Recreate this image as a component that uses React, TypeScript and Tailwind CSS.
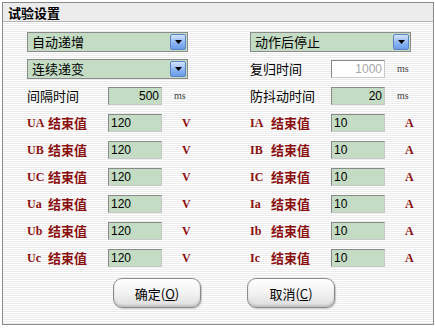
import React from 'react';

const cjk = "font-['Noto_Sans_CJK_SC',sans-serif]";

const Select: React.FC<{ value: string }> = ({ value }) => (
  <div className="flex h-[20px] w-[161px] items-center border border-[#8a8a8a] bg-[#c3dcc3] pl-[4px] pr-[1px]">
    <span className={`flex-1 text-[13px] leading-none text-black ${cjk}`}>{value}</span>
    <div className="flex h-[16px] w-[16px] items-center justify-center rounded-[2px] border border-[#5b82c2] bg-[linear-gradient(to_bottom,#d3e4fb,#8db5f2_55%,#6a9ce8)]">
      <svg width="7" height="4" viewBox="0 0 7 4">
        <path d="M0 0h7L3.5 4z" fill="#000" />
      </svg>
    </div>
  </div>
);

const Field: React.FC<{ value: string; right?: boolean; disabled?: boolean }> = ({ value, right, disabled }) => (
  <div
    className={`flex h-[18px] w-[54px] items-center border border-t-[#888] border-l-[#888] border-r-[#c8c8c8] border-b-[#c8c8c8] px-[2px] font-['Liberation_Sans',sans-serif] text-[12px] leading-none ${
      right ? 'justify-end' : 'justify-start'
    } ${disabled ? 'bg-white text-[#a8a8a8]' : 'bg-[#c3dcc3] text-black'}`}
  >
    {value}
  </div>
);

const Unit: React.FC<{ text: string; red?: boolean; ml: string }> = ({ text, red, ml }) => (
  <span
    className={`${ml} font-['Liberation_Serif',serif] leading-none ${
      red ? 'text-[12px] font-bold text-[#8b1010]' : 'text-[10px] text-[#444]'
    }`}
  >
    {text}
  </span>
);

const EndRow: React.FC<{ tag: string; value: string; unit: string }> = ({ tag, value, unit }) => (
  <div className="flex h-[27px] items-center">
    <div className="flex w-[81px] items-center">
      <span className="w-[21px] font-['Liberation_Serif',serif] text-[12px] font-bold leading-none text-[#8b1010]">{tag}</span>
      <span className={`text-[13px] font-bold leading-none text-[#8b1010] ${cjk}`}>结束值</span>
    </div>
    <Field value={value} />
    <Unit text={unit} red ml="ml-[20px]" />
  </div>
);

const TimeRow: React.FC<{ label: string; value: string; disabled?: boolean }> = ({ label, value, disabled }) => (
  <div className="flex h-[27px] items-center">
    <span className={`w-[81px] text-[13px] leading-none text-black ${cjk}`}>{label}</span>
    <Field value={value} right disabled={disabled} />
    <Unit text="ms" ml="ml-[12px]" />
  </div>
);

const Btn: React.FC<{ label: string; key2: string }> = ({ label, key2 }) => (
  <button className="flex h-[30px] w-[88px] items-center justify-center rounded-[9px] border border-[#8c8c8c] bg-[linear-gradient(to_bottom,#ffffff,#f2f2f2_50%,#dcdcdc)] shadow-[inset_0_-2px_2px_rgba(0,0,0,0.12),1px_1px_1px_rgba(0,0,0,0.2)]">
    <span className={`text-[13px] leading-none text-black ${cjk}`}>
      {label}(<span className="underline">{key2}</span>)
    </span>
  </button>
);

export default function App() {
  return (
    <div className="h-[328px] w-[435px] bg-white">
      <div className="ml-[2px] mt-[2px] h-[323px] w-[432px] border border-[#8a8a8a]">
        <div className="flex h-[19px] items-center border-b border-[#b4b4b4] bg-[#ececec] pl-[5px]">
          <span className={`text-[13px] font-bold leading-none text-black ${cjk}`}>试验设置</span>
        </div>
        <div className="h-[302px] bg-[repeating-linear-gradient(to_bottom,#ffffff_0px,#ffffff_1px,#ebebeb_1px,#ebebeb_2px)] pl-[24px] pt-[6px]">
          <div className="flex">
            <div className="w-[223px]">
              <div className="flex h-[27px] items-center"><Select value="自动递增" /></div>
              <div className="flex h-[27px] items-center"><Select value="连续递变" /></div>
              <TimeRow label="间隔时间" value="500" />
              <EndRow tag="UA" value="120" unit="V" />
              <EndRow tag="UB" value="120" unit="V" />
              <EndRow tag="UC" value="120" unit="V" />
              <EndRow tag="Ua" value="120" unit="V" />
              <EndRow tag="Ub" value="120" unit="V" />
              <EndRow tag="Uc" value="120" unit="V" />
            </div>
            <div className="w-[180px]">
              <div className="flex h-[27px] items-center"><Select value="动作后停止" /></div>
              <TimeRow label="复归时间" value="1000" disabled />
              <TimeRow label="防抖动时间" value="20" />
              <EndRow tag="IA" value="10" unit="A" />
              <EndRow tag="IB" value="10" unit="A" />
              <EndRow tag="IC" value="10" unit="A" />
              <EndRow tag="Ia" value="10" unit="A" />
              <EndRow tag="Ib" value="10" unit="A" />
              <EndRow tag="Ic" value="10" unit="A" />
            </div>
          </div>
          <div className="mt-[7px] flex gap-[46px] pl-[86px]">
            <Btn label="确定" key2="O" />
            <Btn label="取消" key2="C" />
          </div>
        </div>
      </div>
    </div>
  );
}
